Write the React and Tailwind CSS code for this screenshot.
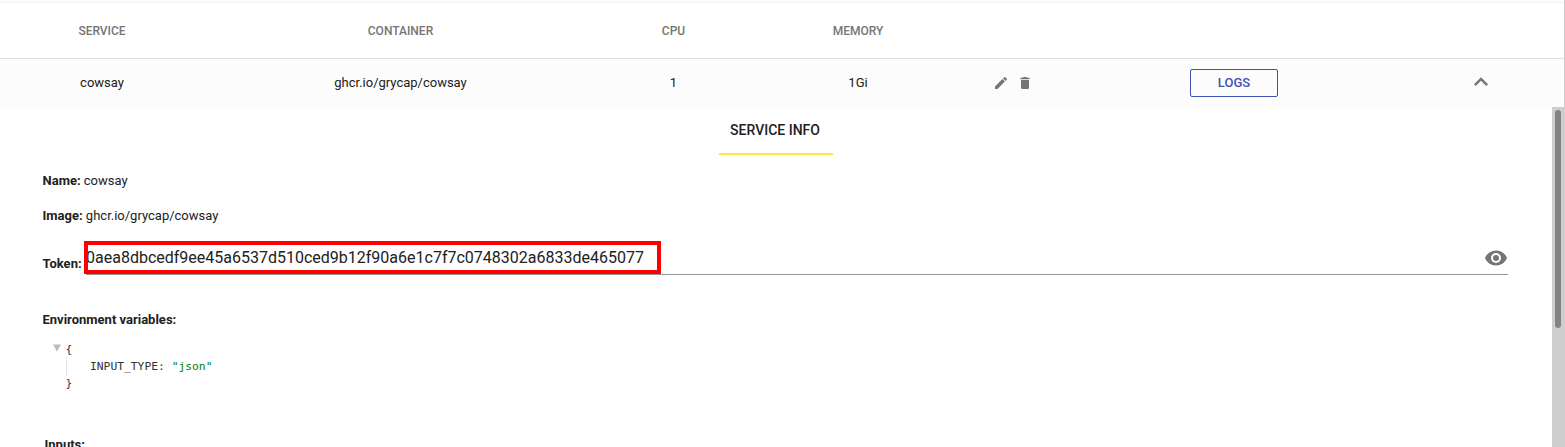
const COLS = 'grid grid-cols-[204px_393px_153px_216px_94px_348px_146px] items-center text-center';

function Icon({ d, className }) {
  return (
    <svg viewBox="0 0 24 24" fill="currentColor" className={className}>
      <path d={d} />
    </svg>
  );
}

const PENCIL = 'M20.71,7.04C21.1,6.65 21.1,6 20.71,5.63L18.37,3.29C18,2.9 17.35,2.9 16.96,3.29L15.12,5.12L18.87,8.87M3,17.25V21H6.75L17.81,9.93L14.06,6.18L3,17.25Z';
const TRASH = 'M19,4H15.5L14.5,3H9.5L8.5,4H5V6H19M6,19A2,2 0 0,0 8,21H16A2,2 0 0,0 18,19V7H6V19Z';
const CHEVRON_UP = 'M7.41,15.41L12,10.83L16.59,15.41L18,14L12,8L6,14L7.41,15.41Z';
const EYE = 'M12,9A3,3 0 0,0 9,12A3,3 0 0,0 12,15A3,3 0 0,0 15,12A3,3 0 0,0 12,9M12,17A5,5 0 0,1 7,12A5,5 0 0,1 12,7A5,5 0 0,1 17,12A5,5 0 0,1 12,17M12,4.5C7,4.5 2.73,7.61 1,12C2.73,16.39 7,19.5 12,19.5C17,19.5 21.27,16.39 23,12C21.27,7.61 17,4.5 12,4.5Z';

function Header() {
  return (
    <div className={`${COLS} h-14 border-b border-[#dfdfdf] text-xs font-medium text-[#757575]`}>
      <span>SERVICE</span>
      <span>CONTAINER</span>
      <span>CPU</span>
      <span>MEMORY</span>
    </div>
  );
}

function ServiceRow() {
  return (
    <div className={`${COLS} h-12 bg-[#fcfcfc]`}>
      <span>cowsay</span>
      <span>ghcr.io/grycap/cowsay</span>
      <span>1</span>
      <span>1Gi</span>
      <span className="flex justify-center gap-2 text-[#757575]">
        <Icon d={PENCIL} className="size-4" />
        <Icon d={TRASH} className="size-4" />
      </span>
      <span className="flex justify-center">
        <button className="h-7 w-[88px] rounded-xs border border-[#3f51b5] font-medium text-[#3f51b5]">LOGS</button>
      </span>
      <span className="flex justify-center pb-0.5 text-[#757575]">
        <Icon d={CHEVRON_UP} className="size-7" />
      </span>
    </div>
  );
}

function EnvTree() {
  return (
    <div className="mt-[11px] ml-[10px] font-['DejaVu_Sans_Mono',monospace] text-[11.3px] leading-[17px] text-[#333]">
      <div className="flex">
        <svg viewBox="0 0 8 8" className="mt-[3px] mr-[5px] size-2 text-[#bbb]" fill="currentColor">
          <path d="M0 0.5H8L4 7.5Z" />
        </svg>
        {'{'}
      </div>
      <div className="ml-[13px] border-l border-dotted border-[#ccc] pl-[23.5px]">
        INPUT_TYPE: <span className="text-[#008000]">"json"</span>
      </div>
      <div className="ml-[13px]">{'}'}</div>
    </div>
  );
}

function ServiceInfo() {
  return (
    <div className="flex h-[340px] overflow-hidden">
      <div className="flex-1">
        <div className="ml-[719px] flex h-12 w-[114px] justify-center border-b-2 border-[#ffeb3b] pt-[13px] pr-0.5 text-sm font-medium whitespace-nowrap">
          SERVICE INFO
        </div>
        <div className="pr-11 pl-[42.5px]">
          <p className="pt-4 leading-5"><b>Name:</b> cowsay</p>
          <p className="mt-[15px] leading-5"><b>Image:</b> ghcr.io/grycap/cowsay</p>
          <div className="mt-[15px] flex h-[34px]">
            <b className="mt-[13px] w-[43.5px] leading-5">Token:</b>
            <div className="relative flex flex-1 items-center border-b border-[#949494]">
              <span className="text-base">0aea8dbcedf9ee45a6537d510ced9b12f90a6e1c7f7c0748302a6833de465077</span>
              <Icon d={EYE} className="mr-[0.5px] ml-auto size-6 text-[#757575]" />
              <div className="absolute top-0 -left-0.5 h-[33px] w-[577px] border-4 border-[#ff0000]" />
            </div>
          </div>
          <p className="mt-[35px] leading-5"><b>Environment variables:</b></p>
          <EnvTree />
          <p className="mt-[43px] ml-0.5 leading-5"><b>Inputs:</b></p>
        </div>
      </div>
      <div className="flex w-[13px] justify-center bg-[#cecece] pt-[3px] pr-px">
        <div className="h-[218px] w-1.5 rounded-full bg-[#808484]" />
      </div>
    </div>
  );
}

export default function App() {
  return (
    <div className="h-[447px] w-[1565px] overflow-hidden bg-white font-[Roboto,sans-serif] text-[13px] text-[#212121]">
      <div className="flex">
        <div className="w-[1564px]">
          <div className="h-[3px] border-b border-[#f1f1f1] bg-[#fcfcfc]" />
          <Header />
          <ServiceRow />
        </div>
        <div className="w-px bg-[#cccccc]" />
      </div>
      <ServiceInfo />
    </div>
  );
}
